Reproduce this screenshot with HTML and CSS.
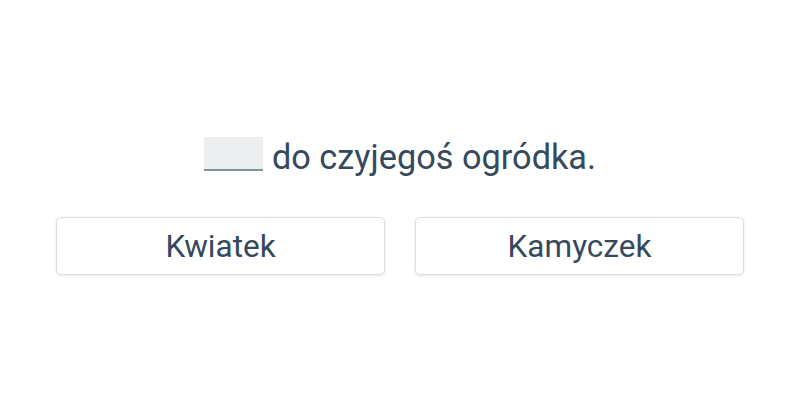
FILE: index.html
```html
<!DOCTYPE html>
<html lang="pl">
<head>
<meta charset="utf-8">
<link rel="stylesheet" href="styles.css">
</head>
<body>
<main class="quiz">
  <p class="sentence"><span class="blank"></span> do czyjegoś ogródka.</p>
  <div class="options">
    <button class="option">Kwiatek</button>
    <button class="option">Kamyczek</button>
  </div>
</main>
</body>
</html>
```

FILE: styles.css
```css
html, body {
  margin: 0;
  padding: 0;
  background: #ffffff;
}
body {
  width: 800px;
  height: 400px;
  font-family: Roboto, "Noto Sans", sans-serif;
  color: #34495e;
}
.quiz {
  display: flex;
  flex-direction: column;
  align-items: center;
  padding-top: 137px;
}
.sentence {
  margin: 0;
  font-size: 34.3px;
  line-height: 40px;
  display: flex;
  align-items: flex-start;
  gap: 9px;
}
.blank {
  display: inline-block;
  width: 59px;
  height: 32px;
  background: #eceef0;
  border-bottom: 2px solid #7f9595;
}
.options {
  display: flex;
  gap: 30px;
  margin-top: 40px;
}
.option {
  width: 329px;
  height: 58px;
  background: #fff;
  border: 1px solid #dedede;
  border-radius: 5px;
  box-shadow: 0 1px 3px rgba(0,0,0,0.1);
  font-family: Roboto, "Noto Sans", sans-serif;
  font-size: 31.5px;
  color: #34495e;
  padding: 0;
}
```
